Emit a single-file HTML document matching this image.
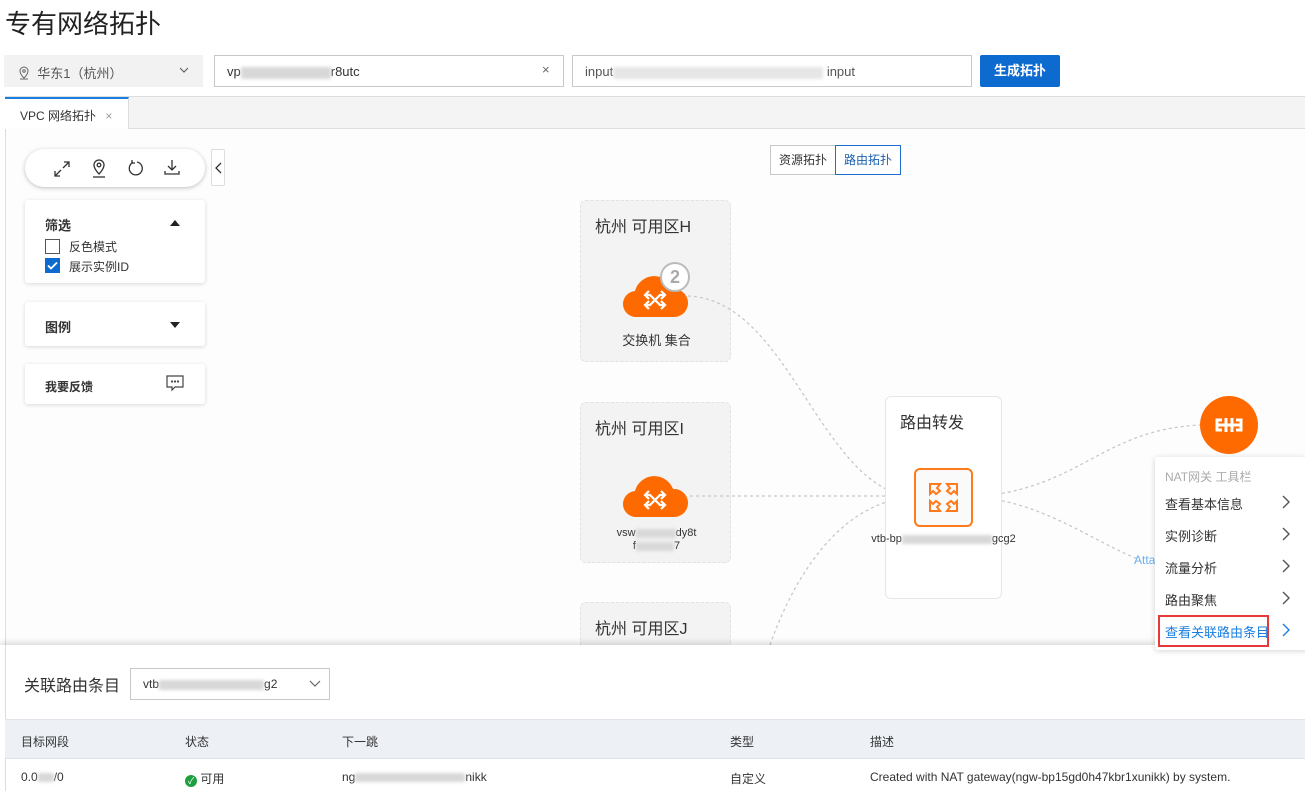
<!DOCTYPE html>
<html><head><meta charset="utf-8"><style>
*{box-sizing:border-box;margin:0;padding:0}
body{width:1305px;height:791px;overflow:hidden;background:#fff;font-family:"Liberation Sans","Noto Sans CJK SC",sans-serif;color:#333;position:relative}
.a{position:absolute}
.blur{display:inline-block;height:12px;background:#d8d8d8;vertical-align:middle;filter:blur(1.5px)}
.card{position:absolute;left:25px;width:180px;background:#fff;box-shadow:0 1px 4px rgba(0,0,0,.15);border-radius:3px}
.zone{position:absolute;left:580px;width:151px;background:#f3f3f3;border:1px dashed #e2e2e2;border-radius:6px}
.zone .t{position:absolute;left:14px;top:12px;font-size:16px;color:#333}
.mi{position:absolute;left:10px;font-size:13px;color:#333}
.ch{position:absolute;left:1282px}
</style></head><body>
<div class="a" style="left:5px;top:4px;font-size:26px;color:#222">专有网络拓扑</div>
<div class="a" style="left:4px;top:55px;width:199px;height:32px;background:#f2f2f2;font-size:13px;color:#555;padding:8px 0 0 14px">
<svg width="12" height="14" viewBox="0 0 12 14" style="vertical-align:-2px"><path d="M6 1a4 4 0 0 0-4 4c0 3 4 7 4 7s4-4 4-7a4 4 0 0 0-4-4z" fill="none" stroke="#666"/><circle cx="6" cy="5" r="1.3" fill="none" stroke="#666"/><path d="M2 13h8" stroke="#666"/></svg>&nbsp; 华东1（杭州）<svg class="a" style="left:175px;top:12px" width="10" height="6" viewBox="0 0 10 6" fill="none" stroke="#666" stroke-width="1.2"><path d="M1 1l4 4 4-4"/></svg></div>
<div class="a" style="left:214px;top:55px;width:350px;height:32px;border:1px solid #c8c8c8;font-size:13px;padding:8px 0 0 12px">vp<span class="blur" style="width:90px"></span>r8utc<span style="position:absolute;left:327px;top:6px;color:#666">×</span></div>
<div class="a" style="left:572px;top:55px;width:400px;height:32px;border:1px solid #c8c8c8;font-size:13px;padding:8px 0 0 12px;color:#555">input<span class="blur" style="width:210px;background:#e6e6e6"></span> input</div>
<div class="a" style="left:980px;top:55px;width:80px;height:32px;background:#0d6bcf;color:#fff;font-size:13px;font-weight:bold;text-align:center;line-height:32px;border-radius:2px">生成拓扑</div>
<div class="a" style="left:5px;top:96px;width:1300px;height:33px;background:#f4f4f4;border-top:1px solid #ddd;border-bottom:1px solid #ddd"></div>
<div class="a" style="left:5px;top:97px;width:124px;height:32px;background:#fff;border-top:2px solid #1a7fe0;border-right:1px solid #ddd;font-size:12px;padding:8px 0 0 15px">VPC 网络拓扑 <span style="color:#999;margin-left:6px">×</span></div>
<div class="a" style="left:5px;top:129px;width:1px;height:520px;background:#ddd"></div>
<div class="a" style="left:6px;top:129px;width:1299px;height:516px;background:#fdfdfd"></div>
<div class="a" style="left:25px;top:149px;width:180px;height:38px;border-radius:19px;background:#fff;box-shadow:0 1px 4px rgba(0,0,0,.25)">
<svg class="a" style="left:28px;top:11px" width="18" height="18" viewBox="0 0 18 18" fill="none" stroke="#333" stroke-width="1.3"><path d="M10 8l6-6M11 2h5v5M8 10l-6 6M2 11v5h5"/></svg>
<svg class="a" style="left:65px;top:9px" width="18" height="20" viewBox="0 0 18 20" fill="none" stroke="#333" stroke-width="1.3"><path d="M9 2a5 5 0 0 0-5 5c0 4 5 9 5 9s5-5 5-9a5 5 0 0 0-5-5z"/><circle cx="9" cy="7" r="1.8"/><path d="M3 19h12"/></svg>
<svg class="a" style="left:102px;top:10px" width="18" height="18" viewBox="0 0 18 18" fill="none" stroke="#333" stroke-width="1.3"><path d="M6 3.5A6.5 6.5 0 1 0 10 3"/><path d="M5 1v3h3"/></svg>
<svg class="a" style="left:138px;top:9px" width="18" height="18" viewBox="0 0 18 18" fill="none" stroke="#333" stroke-width="1.3"><path d="M9 2v10M5 8l4 4 4-4M2 13v3h14v-3"/></svg>
</div>
<div class="a" style="left:211px;top:149px;width:14px;height:37px;border:1px solid #ddd;border-radius:2px;background:#fff"><svg class="a" style="left:3px;top:12px" width="7" height="12" viewBox="0 0 7 12" fill="none" stroke="#333" stroke-width="1.3"><path d="M6 1L1 6l5 5"/></svg></div>
<div class="card" style="top:200px;height:83px">
<div class="a" style="left:20px;top:15px;font-size:13px;font-weight:bold">筛选</div>
<svg class="a" style="left:145px;top:20px" width="10" height="6"><path d="M0 6L5 0l5 6z" fill="#222"/></svg>
<div class="a" style="left:20px;top:39px;width:15px;height:15px;border:1px solid #555;background:#fff"></div>
<div class="a" style="left:44px;top:38px;font-size:12px">反色模式</div>
<div class="a" style="left:20px;top:58px;width:15px;height:15px;background:#0d6bcf"><svg width="15" height="15"><path d="M3 7.5l3 3 6-6" fill="none" stroke="#fff" stroke-width="1.8"/></svg></div>
<div class="a" style="left:44px;top:58px;font-size:12px">展示实例ID</div>
</div>
<div class="card" style="top:302px;height:44px"><div class="a" style="left:20px;top:15px;font-size:13px;font-weight:bold">图例</div><svg class="a" style="left:145px;top:20px" width="10" height="6"><path d="M0 0L5 6l5-6z" fill="#222"/></svg></div>
<div class="card" style="top:364px;height:40px"><div class="a" style="left:20px;top:14px;font-size:12px;font-weight:bold">我要反馈</div>
<svg class="a" style="left:141px;top:11px" width="18" height="17" viewBox="0 0 18 17" fill="none" stroke="#444" stroke-width="1.2"><path d="M1 1h16v11H9l-3 3v-3H1z"/><circle cx="6" cy="6.5" r=".5"/><circle cx="9" cy="6.5" r=".5"/><circle cx="12" cy="6.5" r=".5"/></svg></div>
<div class="a" style="left:770px;top:145px;width:66px;height:30px;border:1px solid #c8c8c8;font-size:12px;text-align:center;line-height:28px;background:#fff">资源拓扑</div>
<div class="a" style="left:835px;top:145px;width:66px;height:30px;border:1px solid #1a6fd0;font-size:12px;text-align:center;line-height:28px;color:#1a5fb0;background:#fff">路由拓扑</div>
<div class="zone" style="top:200px;height:162px"><div class="t">杭州 可用区H</div>
<svg class="a" style="left:42px;top:72px" width="66" height="44" viewBox="0 0 66 44"><path d="M14 44A13 13 0 0 1 12 18 20 20 0 0 1 50 16 14 14 0 0 1 52 44Z" fill="#ff6a00"/><path d="M22 22h5l10 10h5M22 32h5l10-10h5M38 18l4 4-4 4M38 28l4 4-4 4M26 18l-4 4 4 4M26 28l-4 4 4 4" stroke="#fff" stroke-width="2.2" fill="none"/></svg>
<div class="a" style="left:79px;top:61px;width:30px;height:30px;border-radius:50%;background:#fff;border:2px solid #bbb;color:#aaa;font-weight:bold;font-size:18px;text-align:center;line-height:26px">2</div>
<div class="a" style="left:0;top:129px;width:151px;text-align:center;font-size:13px">交换机 集合</div></div>
<div class="zone" style="top:402px;height:161px"><div class="t">杭州 可用区I</div>
<svg class="a" style="left:42px;top:70px" width="66" height="44" viewBox="0 0 66 44"><path d="M14 44A13 13 0 0 1 12 18 20 20 0 0 1 50 16 14 14 0 0 1 52 44Z" fill="#ff6a00"/><path d="M22 22h5l10 10h5M22 32h5l10-10h5M38 18l4 4-4 4M38 28l4 4-4 4M26 18l-4 4 4 4M26 28l-4 4 4 4" stroke="#fff" stroke-width="2.2" fill="none"/></svg>
<div class="a" style="left:0;top:124px;width:151px;text-align:center;font-size:11px;line-height:13px">vsw<span class="blur" style="width:40px;height:9px"></span>dy8t<br>f<span class="blur" style="width:38px;height:9px"></span>7</div></div>
<div class="zone" style="top:602px;height:60px"><div class="t">杭州 可用区J</div></div>
<svg class="a" style="left:0;top:0" width="1305" height="645" fill="none" stroke="#c8c8c8" stroke-width="1.3" stroke-dasharray="3 3">
<path d="M688 296C790 300 820 490 914 497"/><path d="M690 496H914"/><path d="M770 645C800 560 850 500 914 497"/>
<path d="M972 497C1080 490 1100 430 1200 425"/><path d="M972 497C1040 500 1090 540 1140 560"/></svg>
<div class="a" style="left:885px;top:396px;width:117px;height:203px;border:1px solid #e6e6e6;border-radius:6px;background:#fff">
<div class="a" style="left:14px;top:12px;font-size:16px">路由转发</div>
<div class="a" style="left:28px;top:71px;width:59px;height:59px;border:2px solid #ff7a1a;border-radius:6px;background:#fafafa">
<svg width="55" height="55" viewBox="0 0 55 55" fill="none" stroke="#ff7a1a" stroke-width="2"><path d="M14 14h10l-3 4 3 3-4 3-3-3-3 3zM41 14H31l3 4-3 3 4 3 3-3 3 3zM14 41h10l-3-4 3-3-4-3-3 3-3-3zM41 41H31l3-4-3-3 4-3 3 3 3-3z"/></svg></div>
<div class="a" style="left:-25px;top:136px;width:165px;text-align:center;font-size:11px">vtb-bp<span class="blur" style="width:90px;height:9px"></span>gcg2</div></div>
<div class="a" style="left:1200px;top:396px;width:58px;height:58px;border-radius:50%;background:#ff6a00">
<svg width="58" height="58" viewBox="0 0 58 58" fill="none" stroke="#fff" stroke-width="3"><path d="M22 24h-5v10h5M36 24h5v10h-5M17 29h24M26 22v14M32 22v14"/></svg></div>
<div class="a" style="left:1134px;top:553px;font-size:12px;color:#6ab0f0">Atta</div>
<div class="a" style="left:0;top:645px;width:1305px;height:146px;background:#fff;box-shadow:0 -3px 5px rgba(0,0,0,.12)"></div>
<div class="a" style="left:5px;top:645px;width:1px;height:146px;background:#ddd"></div>
<div class="a" style="left:1155px;top:457px;width:155px;height:193px;background:#fff;box-shadow:0 1px 6px rgba(0,0,0,.18);border-radius:3px">
<div class="mi" style="top:11px;font-size:12px;color:#aaa">NAT网关 工具栏</div>
<div class="mi" style="top:37px">查看基本信息</div><div class="mi" style="top:69px">实例诊断</div><div class="mi" style="top:101px">流量分析</div><div class="mi" style="top:133px">路由聚焦</div>
<div class="a" style="left:3px;top:158px;width:111px;height:32px;border:2px solid #e8393a"></div>
<div class="mi" style="top:165px;color:#1a7fe0">查看关联路由条目</div>
</div>
<svg class="ch" style="top:495px" width="8" height="14" fill="none" stroke="#555" stroke-width="1.4"><path d="M1 1l6 6-6 6"/></svg>
<svg class="ch" style="top:527px" width="8" height="14" fill="none" stroke="#555" stroke-width="1.4"><path d="M1 1l6 6-6 6"/></svg>
<svg class="ch" style="top:559px" width="8" height="14" fill="none" stroke="#555" stroke-width="1.4"><path d="M1 1l6 6-6 6"/></svg>
<svg class="ch" style="top:591px" width="8" height="14" fill="none" stroke="#555" stroke-width="1.4"><path d="M1 1l6 6-6 6"/></svg>
<svg class="ch" style="top:623px" width="8" height="14" fill="none" stroke="#1a7fe0" stroke-width="1.4"><path d="M1 1l6 6-6 6"/></svg>
<div class="a" style="left:24px;top:672px;font-size:16px">关联路由条目</div>
<div class="a" style="left:130px;top:668px;width:200px;height:32px;border:1px solid #c8c8c8;font-size:12px;padding:8px 0 0 12px">vtb<span class="blur" style="width:105px;height:10px"></span>g2<svg class="a" style="left:178px;top:11px" width="12" height="8" fill="none" stroke="#666" stroke-width="1.2"><path d="M1 1l5 5 5-5"/></svg></div>
<div class="a" style="left:5px;top:719px;width:1300px;height:40px;background:#edf1f6;border-top:1px solid #e0e4ea;border-bottom:1px solid #e0e4ea;font-size:12px">
<span class="a" style="left:16px;top:13px">目标网段</span><span class="a" style="left:180px;top:13px">状态</span><span class="a" style="left:337px;top:13px">下一跳</span><span class="a" style="left:725px;top:13px">类型</span><span class="a" style="left:865px;top:13px">描述</span></div>
<div class="a" style="left:5px;top:760px;width:1300px;height:31px;font-size:12px">
<span class="a" style="left:16px;top:10px">0.0<span class="blur" style="width:16px;height:9px"></span>/0</span>
<span class="a" style="left:180px;top:10px"><span style="display:inline-block;width:12px;height:12px;border-radius:50%;background:#1e9e3e;color:#fff;font-size:9px;text-align:center;line-height:12px;vertical-align:-1px">✓</span> 可用</span>
<span class="a" style="left:337px;top:10px">ng<span class="blur" style="width:110px;height:9px"></span>nikk</span>
<span class="a" style="left:725px;top:10px">自定义</span>
<span class="a" style="left:865px;top:10px">Created with NAT gateway(ngw-bp15gd0h47kbr1xunikk) by system.</span></div>
</body></html>
